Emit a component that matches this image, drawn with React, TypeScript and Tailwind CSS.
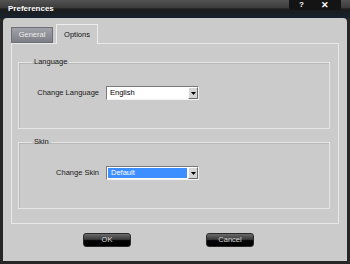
import React from "react";

function Select({ value, selected }: { value: string; selected?: boolean }) {
  return (
    <div className="flex h-[14px] w-[93px] border border-t-[#7a7a7a] border-l-[#7a7a7a] border-b-[#f4f4f4] border-r-[#f4f4f4] bg-white">
      <div
        className={
          selected
            ? "flex flex-1 items-center m-px pl-[3px] bg-[#3d8eff] text-white"
            : "flex flex-1 items-center pl-[3px] text-black"
        }
      >
        {value}
      </div>
      <div className="flex w-[10px] items-center justify-center bg-[#d6d6d6] border border-t-white border-l-white border-b-[#6a6a6a] border-r-[#6a6a6a]">
        <svg width="5" height="3" viewBox="0 0 5 3">
          <path d="M0 0h5L2.5 3z" fill="#000" />
        </svg>
      </div>
    </div>
  );
}

function Group({ title, label, value, selected }: { title: string; label: string; value: string; selected?: boolean }) {
  return (
    <fieldset className="h-[72px] ml-[6px] mr-[8px] border border-[#e6e6e6] shadow-[inset_1px_1px_0_#b8b8b8]">
      <legend className="ml-[13px] px-[2px] leading-[10px] text-[#1a1a1a]">{title}</legend>
      <div className="flex items-center pt-[19px]">
        <div className="w-[80px] text-right text-[#1a1a1a]">{label}</div>
        <div className="ml-[7px]">
          <Select value={value} selected={selected} />
        </div>
      </div>
    </fieldset>
  );
}

function DarkButton({ text }: { text: string }) {
  return (
    <button className="flex h-[14px] w-[48px] items-center justify-center rounded-[3px] border border-[#2a2a2a] bg-[linear-gradient(to_bottom,#6a6a6a_0%,#3a3a3a_45%,#050505_55%,#000_100%)] text-[#d8d8d8]">
      {text}
    </button>
  );
}

export default function App() {
  return (
    <div
      className="flex h-[264px] w-[350px] flex-col bg-[#262626] text-[7.5px]"
      style={{ fontFamily: '"Liberation Sans", Arial, sans-serif' }}
    >
      {/* title bar */}
      <div className="flex h-[18px] bg-[linear-gradient(to_bottom,#545454_0%,#3c3c3c_42%,#1c1c1c_50%,#17222e_100%)]">
        <div className="pl-[8px] pt-[3px] text-[8px] font-bold text-white">Preferences</div>
        <div className="ml-auto mr-[9px] flex h-[10px] w-[52px] items-center rounded-b-[3px] bg-[#141414] text-[8px] font-bold text-white">
          <span className="ml-[10px]">?</span>
          <span className="ml-[17px] text-[9px] leading-none">✕</span>
        </div>
      </div>

      {/* body */}
      <div className="mx-[3px] mb-[3px] flex flex-1 flex-col rounded-t-[4px] bg-[#cbcbcb]">
        {/* tabs */}
        <div className="flex items-end pl-[8px] pt-[6px]">
          <div className="flex h-[16px] w-[42px] items-center justify-center border border-[#6e6e76] bg-[linear-gradient(to_bottom,#a2a2aa,#7e7e86)] text-[#ececec]">
            General
          </div>
          <div className="relative -mb-px ml-[3px] flex h-[20px] w-[42px] items-center justify-center border border-b-0 border-[#ededed] bg-[#cbcbcb] text-[#111]">
            Options
          </div>
        </div>

        {/* panel */}
        <div className="ml-[8px] mr-[8px] flex h-[181px] flex-col border border-[#e8e8e8] pt-[13px]">
          <Group title="Language" label="Change Language" value="English" />
          <div className="h-[8px]" />
          <Group title="Skin" label="Change Skin" value="Default" selected />
        </div>

        {/* buttons */}
        <div className="flex pl-[80px] pt-[9px]">
          <DarkButton text="OK" />
          <div className="w-[75px]" />
          <DarkButton text="Cancel" />
        </div>
      </div>
    </div>
  );
}
